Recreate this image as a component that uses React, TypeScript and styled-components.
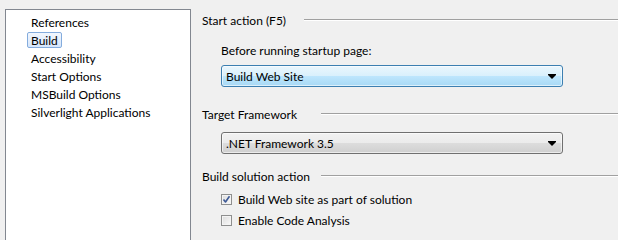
import React from 'react';
import styled, {createGlobalStyle} from 'styled-components';

const GlobalStyle = createGlobalStyle`
  html, body {
    margin: 0;
    padding: 0;
    background: #f0f0f0;
    overflow: hidden;
  }
  body {
    font-family: "Segoe UI", Lato, "Open Sans", sans-serif;
    font-size: 12px;
    color: #000;
  }
`;

const pages = ['References', 'Build', 'Accessibility', 'Start Options', 'MSBuild Options', 'Silverlight Applications'];

const ArrowIcon = () => (
    <svg width="8" height="5" viewBox="0 0 8 5">
        <path d="M0 0 H8 V1 L4 5 L0 1 Z" fill="#000"/>
    </svg>
);

const CheckIcon = () => (
    <svg width="9" height="9" viewBox="0 0 9 9">
        <path d="M1.5 4.5 L3.5 7 L7.5 1.2" fill="none" stroke="#3e5a96" strokeWidth="1.6" strokeLinejoin="round"/>
    </svg>
);

const App = () => {
    return <Root>
        <GlobalStyle/>
        <PageList>
            {pages.map(p => (
                <PageItem key={p}>
                    <PageLabel $active={p === 'Build'}>{p}</PageLabel>
                </PageItem>
            ))}
        </PageList>

        <Settings>
            <GroupHeader $mt={0}>
                <GroupTitle $width={102}>Start action (F5)</GroupTitle>
                <Rule/>
            </GroupHeader>
            <FieldLabel $mt={13}>Before running startup page:</FieldLabel>
            <Dropdown $mt={5} $hot>
                <span>Build Web Site</span>
                <ArrowIcon/>
            </Dropdown>

            <GroupHeader $mt={18}>
                <GroupTitle $width={119}>Target Framework</GroupTitle>
                <Rule/>
            </GroupHeader>
            <Dropdown $mt={9}>
                <span>.NET Framework 3.5</span>
                <ArrowIcon/>
            </Dropdown>

            <GroupHeader $mt={13}>
                <GroupTitle $width={119}>Build solution action</GroupTitle>
                <Rule/>
            </GroupHeader>
            <CheckRow $mt={5}>
                <CheckBox><CheckIcon/></CheckBox>
                <span>Build Web site as part of solution</span>
            </CheckRow>
            <CheckRow $mt={3}>
                <CheckBox/>
                <span>Enable Code Analysis</span>
            </CheckRow>
        </Settings>
    </Root>;
};

export default App;



const Root = styled.div`
  display: flex;
  padding: 9px 0 0 5px;
  height: 240px;
  box-sizing: border-box;
  overflow: hidden;
`;

const PageList = styled.ul`
  list-style: none;
  margin: 0;
  padding: 3px 0 0 0;
  width: 186px;
  box-sizing: border-box;
  background: #fff;
  border: 1px solid #828790;
  border-bottom: 0;
  flex-shrink: 0;
`;

const PageItem = styled.li`
  height: 18px;
  padding-left: 21px;
  display: flex;
  align-items: center;
`;

const PageLabel = styled.span<{ $active?: boolean }>`
  display: inline-block;
  height: 16px;
  line-height: 15px;
  padding: 0 3px;
  border: 1px solid ${p => p.$active ? '#84acdd' : 'transparent'};
  border-radius: 2px;
  background: ${p => p.$active ? 'linear-gradient(#f2f7fe, #d6e6fb)' : 'transparent'};
  box-sizing: border-box;
  white-space: nowrap;
`;

const Settings = styled.div`
  flex: 1;
  display: flex;
  flex-direction: column;
  padding: 2px 0 0 11px;
`;

const GroupHeader = styled.div<{ $mt: number }>`
  display: flex;
  align-items: center;
  height: 18px;
  margin-top: ${p => p.$mt}px;
`;

const GroupTitle = styled.span<{ $width: number }>`
  width: ${p => p.$width}px;
  flex-shrink: 0;
  white-space: nowrap;
`;

const Rule = styled.div`
  flex: 1;
  height: 0;
  border-top: 1px solid #a0a0a0;
  border-bottom: 1px solid #fff;
`;

const FieldLabel = styled.div<{ $mt: number }>`
  height: 18px;
  line-height: 18px;
  margin: ${p => p.$mt}px 0 0 19px;
`;

const Dropdown = styled.div<{ $mt: number; $hot?: boolean }>`
  margin: ${p => p.$mt}px 0 0 19px;
  width: 342px;
  height: 22px;
  box-sizing: border-box;
  display: flex;
  align-items: center;
  justify-content: space-between;
  padding: 0 6px 0 4px;
  border: 1px solid ${p => p.$hot ? '#3c7fb1' : '#707070'};
  border-radius: 3px;
  background: ${p => p.$hot
    ? 'linear-gradient(#eaf6fd 0%, #d9f0fc 50%, #bee6fd 50%, #a7d9f5 100%)'
    : 'linear-gradient(#f2f2f2 0%, #ebebeb 50%, #dddddd 50%, #cfcfcf 100%)'};
  box-shadow: inset 0 0 0 1px rgba(255, 255, 255, 0.6);
`;

const CheckRow = styled.label<{ $mt: number }>`
  display: flex;
  align-items: center;
  gap: 6px;
  height: 18px;
  margin: ${p => p.$mt}px 0 0 19px;
`;

const CheckBox = styled.span`
  width: 11px;
  height: 11px;
  box-sizing: border-box;
  border: 1px solid #8e8f8f;
  background: linear-gradient(135deg, #dcdcdc, #fafafa);
  box-shadow: inset 0 0 0 1px #f4f4f4;
  display: flex;
  align-items: center;
  justify-content: center;
`;
